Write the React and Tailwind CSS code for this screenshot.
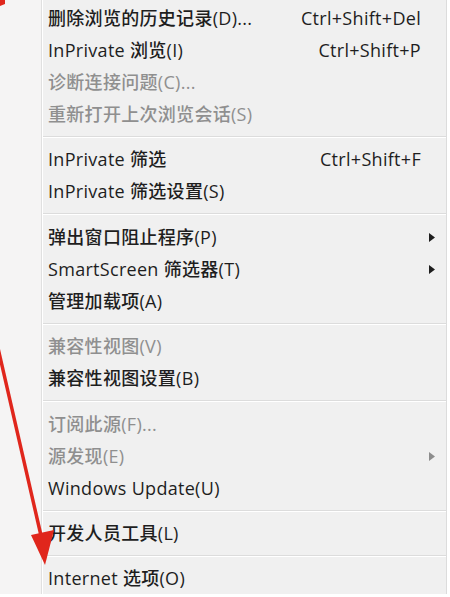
import React from 'react'

const items = [
  { label: '删除浏览的历史记录(D)...', shortcut: 'Ctrl+Shift+Del' },
  { label: 'InPrivate 浏览(I)', shortcut: 'Ctrl+Shift+P' },
  { label: '诊断连接问题(C)...', disabled: true },
  { label: '重新打开上次浏览会话(S)', disabled: true },
  { sep: 'h-[13px]' },
  { label: 'InPrivate 筛选', shortcut: 'Ctrl+Shift+F' },
  { label: 'InPrivate 筛选设置(S)' },
  { sep: 'h-[14px]' },
  { label: '弹出窗口阻止程序(P)', sub: true },
  { label: 'SmartScreen 筛选器(T)', sub: true },
  { label: '管理加载项(A)' },
  { sep: 'h-[13px]' },
  { label: '兼容性视图(V)', disabled: true },
  { label: '兼容性视图设置(B)' },
  { sep: 'h-[14px]' },
  { label: '订阅此源(F)...', disabled: true },
  { label: '源发现(E)', disabled: true, sub: true },
  { label: 'Windows Update(U)' },
  { sep: 'h-[13px]' },
  { label: '开发人员工具(L)' },
  { sep: 'h-[13px]' },
  { label: 'Internet 选项(O)' },
]

function Arrow({ disabled }) {
  return (
    <svg width="6" height="9" viewBox="0 0 6 9">
      <path d="M0 0 L6 4.5 L0 9 Z" fill={disabled ? '#8d8d8d' : '#1e1e1e'} />
    </svg>
  )
}

export default function App() {
  return (
    <div
      className="relative w-[450px] h-[597px] bg-white overflow-hidden"
      style={{ fontFamily: '"Open Sans", "Noto Sans CJK SC", sans-serif' }}
    >
      <div className="flex w-[447px] h-[594px] bg-[#f0f0f0] border-r border-[#dcdcdc]">
        {/* icon gutter */}
        <div className="w-[42px] bg-[#f5f4f4] border-r border-[#e0e0e0]" />
        <div className="w-px bg-white" />

        <div className="flex-1 flex flex-col pt-[2px]">
          {items.map((it, i) =>
            it.sep ? (
              <div key={i} className={`${it.sep} flex flex-col justify-center`}>
                <div className="h-px bg-[#dcdcdc]" />
                <div className="h-px bg-white" />
              </div>
            ) : (
              <div
                key={i}
                className={`h-[32px] flex items-center pl-[5px] text-[18px] font-medium tracking-[0.3px] ${
                  it.disabled ? 'text-[#8f8f8f]' : 'text-[#1e1e1e]'
                }`}
              >
                <span className="flex-1 whitespace-nowrap">{it.label}</span>
                {it.shortcut && <span className="whitespace-nowrap">{it.shortcut}</span>}
                <span className="w-[25px] flex pl-[8px]">
                  {it.sub && <Arrow disabled={it.disabled} />}
                </span>
              </div>
            )
          )}
        </div>
      </div>

      {/* red annotation arrow */}
      <svg className="absolute left-0 top-0 pointer-events-none" width="450" height="597">
        <path d="M0 0 L5 0 L5 4 L0 6 Z" fill="#e0261c" />
        <line x1="-2" y1="348" x2="42" y2="540" stroke="#e0261c" strokeWidth="3.5" />
        <path d="M31 535 L54 530 L45 565 Z" fill="#e0261c" />
      </svg>
    </div>
  )
}
